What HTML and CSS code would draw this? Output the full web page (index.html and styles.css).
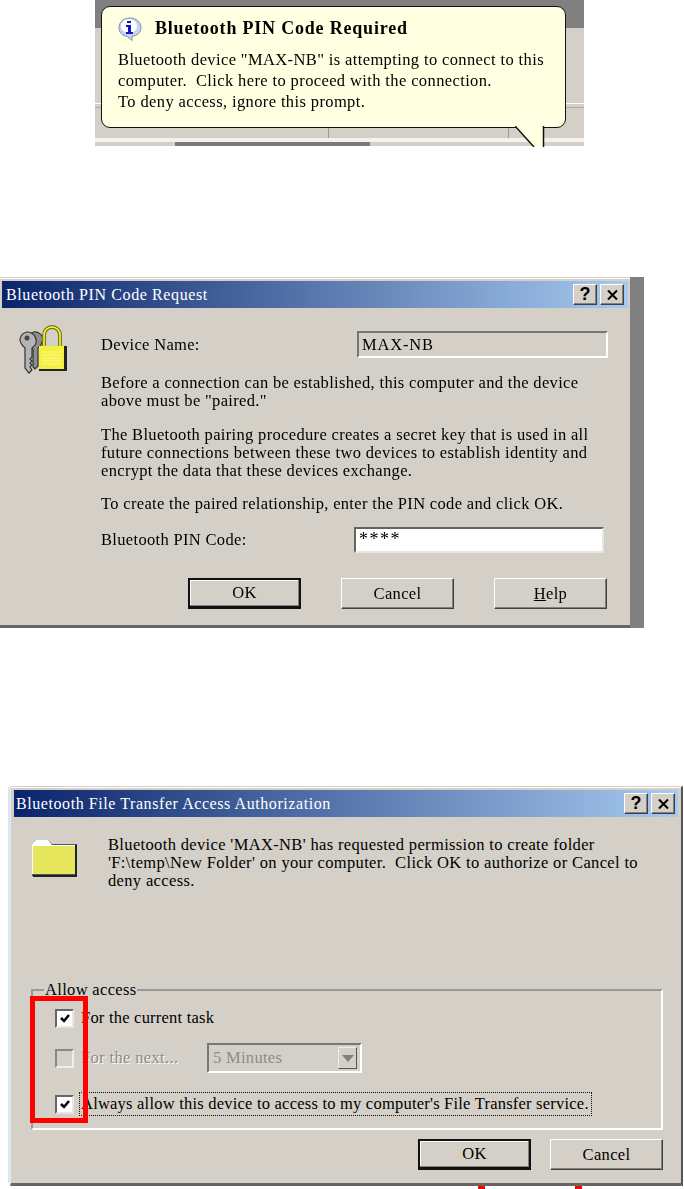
FILE: index.html
```html
<!DOCTYPE html>
<html lang="en">
<head>
<meta charset="utf-8">
<title>Bluetooth dialogs</title>
<link rel="stylesheet" href="styles.css">
</head>
<body>
<main class="page">
  <section class="tray">
    <div class="balloon">
      <div class="balloon-head">
        <svg class="info-icon" viewBox="0 0 24 24" width="24" height="24" aria-hidden="true">
          <path d="M12 1C5.500 1 1 5 1 10.500S5 19 9.500 19.600L14 23.500V19.500C19.500 18.500 23 15.500 23 10.500S18.500 1 12 1Z" fill="#c8d4ee" stroke="#7f8fa8"/>
          <ellipse cx="11" cy="9" rx="8" ry="7" fill="#fff"/>
          <path d="M9 6h4V4H9ZM8 8h5v7h2v2H8v-2h2v-5H8Z" fill="#1414c8"/>
        </svg>
        <strong class="balloon-title">Bluetooth PIN Code Required</strong>
      </div>
      <p class="balloon-text">Bluetooth device "MAX-NB" is attempting to connect to this<br>computer.&nbsp; Click here to proceed with the connection.<br>To deny access, ignore this prompt.</p>
    </div>
    <svg class="tail" viewBox="0 0 30 21" width="30" height="21" aria-hidden="true">
      <path d="M0 0 19 21H28.500V0Z" fill="#ffffe1"/>
      <path d="M0 0 19 21M28.500 21V0" fill="none" stroke="#111" stroke-width="1.500"/>
    </svg>
  </section>

  <section class="pin-wrap">
    <div class="dialog pin-dialog">
      <header class="titlebar">
        <span class="title-text">Bluetooth PIN Code Request</span>
        <div class="title-buttons">
          <span class="cap">?</span>
          <span class="cap"><svg viewBox="0 0 12 12" width="13" height="12" aria-hidden="true"><path d="M1.500 1.500 10.500 10.500M10.500 1.500 1.500 10.500" stroke="#000" stroke-width="2" fill="none"/></svg></span>
        </div>
      </header>
      <div class="pin-body">
        <svg class="lock-icon" viewBox="0 0 50 50" width="50" height="50" aria-hidden="true">
          <path d="M15 7a8 8 0 0 1 9 7l-2 6-3 3v18l-3 3-2-2v-17l-3-5a8 8 0 0 1 4-13Z" fill="#8e8e8e" stroke="#333" stroke-width="1.200"/>
          <path d="M8 7a9 9 0 0 0-7 7c0 5 3 7 5 9v20l4 5 3-3-2-3 2-2-2-2 2-2-2-2 2-2v-9c3-2 5-5 4-9a9 9 0 0 0-9-7Z" fill="#b4b4b4" stroke="#333" stroke-width="1.200"/>
          <circle cx="8" cy="13" r="2.500" fill="#444"/>
          <path d="M25 21V10a8 8 0 0 1 16 0v11" fill="none" stroke="#77771c" stroke-width="4"/>
          <path d="M25 21V10a8 8 0 0 1 16 0v11" fill="none" stroke="#ffff30" stroke-width="1.500"/>
          <rect x="20" y="21" width="28" height="25" fill="#222"/>
          <rect x="20" y="21" width="25" height="23" fill="#f4f040"/>
          <path d="M23 27h19M23 30h19M23 33h19M23 36h19M23 39h19" stroke="#fff890"/>
        </svg>
        <div class="pin-content">
          <div class="field-row device-row">
            <span>Device Name:</span>
            <span class="readonly-field">MAX-NB</span>
          </div>
          <p class="para para-first">Before a connection can be established, this computer and the device<br>above must be "paired."</p>
          <p class="para para-second">The Bluetooth pairing procedure creates a secret key that is used in all<br>future connections between these two devices to establish identity and<br>encrypt the data that these devices exchange.</p>
          <p class="para para-third">To create the paired relationship, enter the PIN code and click OK.</p>
          <div class="field-row code-row">
            <span>Bluetooth PIN Code:</span>
            <span class="text-field">****</span>
          </div>
          <div class="actions pin-actions">
            <span class="btn btn-default">OK</span>
            <span class="btn">Cancel</span>
            <span class="btn"><u>H</u>elp</span>
          </div>
        </div>
      </div>
    </div>
    <div class="shadow-strip"></div>
  </section>

  <section class="dialog auth-dialog">
    <header class="titlebar auth-titlebar">
      <span class="title-text auth-title">Bluetooth File Transfer Access Authorization</span>
      <div class="title-buttons">
        <span class="cap">?</span>
        <span class="cap"><svg viewBox="0 0 12 12" width="13" height="12" aria-hidden="true"><path d="M1.500 1.500 10.500 10.500M10.500 1.500 1.500 10.500" stroke="#000" stroke-width="2" fill="none"/></svg></span>
      </div>
    </header>
    <div class="auth-top">
      <svg class="folder-icon" viewBox="0 0 48 38" width="48" height="38" aria-hidden="true">
        <path d="M1 5 5 1H17L21 5H46V37H1Z" fill="#555"/>
        <path d="M1 5 5 1H17L21 6H44V35H1Z" fill="#fff"/>
        <path d="M2 7H44V35H2Z" fill="#e6e65c"/>
        <path d="M45 6V37H2" fill="none" stroke="#222" stroke-width="2"/>
      </svg>
      <p class="para auth-text">Bluetooth device 'MAX-NB' has requested permission to create folder<br>'F:\temp\New Folder' on your computer.&nbsp; Click OK to authorize or Cancel to<br>deny access.</p>
    </div>
    <fieldset class="group">
      <legend class="group-label">Allow access</legend>
      <div class="check-row row-one">
        <span class="checkbox"><svg viewBox="0 0 12 12" width="12" height="12" aria-hidden="true"><path d="M2 6 5 9 10 3" fill="none" stroke="#000" stroke-width="2.500"/></svg></span>
        <span class="check-label">For the current task</span>
      </div>
      <div class="check-row row-two">
        <span class="checkbox checkbox-off"></span>
        <span class="check-label label-off">For the next...</span>
        <span class="combo"><span class="combo-value">5 Minutes</span><span class="combo-arrow"></span></span>
      </div>
      <div class="check-row row-three">
        <span class="checkbox"><svg viewBox="0 0 12 12" width="12" height="12" aria-hidden="true"><path d="M2 6 5 9 10 3" fill="none" stroke="#000" stroke-width="2.500"/></svg></span>
        <span class="check-label label-focus">Always allow this device to access to my computer's File Transfer service.</span>
      </div>
      <div class="highlight"></div>
    </fieldset>
    <div class="actions auth-actions">
      <span class="btn btn-default">OK</span>
      <span class="btn">Cancel</span>
    </div>
  </section>
  <div class="marks"><span></span><span></span></div>
</main>
</body>
</html>
```
FILE: styles.css
```css
* { box-sizing: border-box; }
html, body { margin: 0; background: #fff; }
body { width: 684px; height: 1189px; overflow: hidden; }
.page {
  width: 684px;
  height: 1189px;
  font-family: "Liberation Serif", serif;
  font-size: 16.500px;
  letter-spacing: 0.33px;
  color: #000;
  filter: blur(0.4px);
}

/* balloon */
.tray {
  position: relative;
  width: 489px;
  height: 146px;
  margin-left: 95px;
  background:
    linear-gradient(#808080, #808080) 0 0 / 100% 28px no-repeat,
    linear-gradient(#aaa, #aaa) 0 107px / 100% 1px no-repeat,
    linear-gradient(#fff, #fff) 0 103px / 100% 1px no-repeat,
    linear-gradient(#999, #999) 233px 127px / 1px 11px no-repeat,
    linear-gradient(#999, #999) 413px 127px / 1px 11px no-repeat,
    linear-gradient(#f4f2ee, #f4f2ee) 0 138px / 100% 4px no-repeat,
    linear-gradient(#7a7a7a, #7a7a7a) 80px 142px / 195px 4px no-repeat,
    #d4d0c8;
}
.balloon {
  position: absolute;
  left: 6px;
  top: 6px;
  width: 465px;
  height: 122px;
  padding: 8px 16px;
  background: #ffffe1;
  border: 1.500px solid #111;
  border-radius: 9px;
}
.balloon-head { display: flex; align-items: center; gap: 13px; height: 27px; }
.info-icon { flex: none; }
.balloon-title { font-size: 18px; letter-spacing: 0.8px; white-space: nowrap; }
.balloon-text { margin: 7px 0 0; line-height: 21px; letter-spacing: 0.38px; white-space: nowrap; }
.tail { position: absolute; left: 420px; top: 126px; }

/* dialogs */
.dialog {
  background: #d4d0c8;
  border-top: 1px solid #d4d0c8;
  box-shadow: inset 0 1px 0 #fff;
}
.pin-wrap { display: flex; width: 644px; height: 351px; margin-top: 131px; }
.pin-dialog {
  width: 630px;
  padding: 3px 2px 0;
  border-bottom: 3px solid #666;
}
.shadow-strip { width: 14px; background: #808080; }
.titlebar {
  display: flex;
  align-items: center;
  justify-content: space-between;
  height: 27px;
  padding: 0 4px 0 4px;
  background: linear-gradient(90deg, #0a246a, #a6caf0);
}
.auth-titlebar { padding: 0 3px 0 2px; }
.title-text { color: #fff; font-size: 16px; letter-spacing: 0.6px; white-space: nowrap; }
.auth-title { letter-spacing: 0.57px; }
.title-buttons { display: flex; gap: 3px; }
.cap {
  display: flex;
  align-items: center;
  justify-content: center;
  width: 24px;
  height: 21px;
  background: #d4d0c8;
  border: 1px solid;
  border-color: #fff #404040 #404040 #fff;
  box-shadow: inset -1px -1px 0 #808080;
  color: #000;
  font-family: "Liberation Sans", sans-serif;
  font-weight: 700;
  font-size: 18px;
  letter-spacing: 0;
}
.pin-body { display: flex; }
.lock-icon { flex: none; margin: 17px 0 0 17px; }
.pin-content { margin-left: 32px; width: 507px; }
.field-row { display: flex; align-items: center; justify-content: space-between; }
.device-row { height: 27px; margin-top: 23px; }
.readonly-field {
  display: flex;
  align-items: center;
  width: 251px;
  height: 27px;
  padding-left: 3px;
  border: 2px solid;
  border-color: #77756f #fff #fff #77756f;
  letter-spacing: 0.8px;
}
.text-field {
  display: flex;
  align-items: flex-start;
  width: 250px;
  height: 26px;
  padding-left: 3px;
  background: #fff;
  border: 2px solid;
  border-color: #66645f #e8e6e0 #e8e6e0 #66645f;
  font-size: 18px;
  letter-spacing: 1.500px;
}
.para { margin: 0; line-height: 18px; white-space: nowrap; }
.para-first { margin-top: 16px; }
.para-second { margin-top: 16px; }
.para-third { margin-top: 15px; }
.code-row { height: 26px; margin-top: 14px; padding-right: 4px; }
.actions { display: flex; }
.pin-actions { gap: 40px; margin: 25px 0 0 87px; }
.btn {
  display: flex;
  align-items: center;
  justify-content: center;
  width: 113px;
  height: 31px;
  border: 1px solid;
  border-color: #fff #404040 #404040 #fff;
  box-shadow: inset -1px -1px 0 #808080;
  background: #d4d0c8;
}
.btn-default {
  border: 2px solid #111;
  border-bottom-width: 3px;
  box-shadow: inset -1px -1px 0 #808080, inset 1px 1px 0 #fff;
}

/* auth */
.auth-dialog {
  position: relative;
  width: 673px;
  height: 400px;
  margin: 158px 0 0 10px;
  padding: 3px 3px 0 3px;
  border-left: 1px solid #e8e8e8;
  border-right: 2px solid #555;
  border-bottom: 3px solid #666;
}
.auth-dialog::before {
  content: "";
  position: absolute;
  left: -3px;
  top: 0;
  bottom: 0;
  width: 2px;
  background: #dbe6f4;
}
.auth-top { display: flex; height: 166px; }
.folder-icon { flex: none; margin: 22px 0 0 17px; }
.auth-text { margin: 19px 0 0 29px; letter-spacing: 0.35px; }
.group {
  position: relative;
  width: 632px;
  height: 147px;
  margin: 0 0 0 17px;
  padding: 0 0 0 22px;
  border: 2px solid;
  border-color: #999 #fff #fff #999;
  min-width: 0;
}
.group-label { margin-left: -11px; padding: 0 1px; line-height: 14px; }
.check-row { display: flex; align-items: center; }
.row-one { height: 20px; margin-top: 11px; }
.row-two { height: 30px; margin-top: 15px; }
.row-three { height: 22px; margin-top: 20px; }
.checkbox {
  flex: none;
  display: flex;
  align-items: center;
  justify-content: center;
  width: 19px;
  height: 19px;
  background: #fff;
  border: 2px solid;
  border-color: #666 #e8e6e0 #e8e6e0 #666;
}
.checkbox-off { background: #d4d0c8; border-color: #888 #f0eee8 #f0eee8 #888; }
.check-label { margin-left: 7px; white-space: nowrap; letter-spacing: 0.22px; }
.label-off { width: 126px; color: #8e8c86; text-shadow: 1px 1px 0 #fff; letter-spacing: 0.35px; }
.label-focus { margin-left: 6px; padding: 1px 2px 1px 1px; outline: 1px dotted #111; }
.combo {
  display: flex;
  align-items: center;
  justify-content: space-between;
  width: 155px;
  height: 30px;
  padding: 0 3px 0 4px;
  border: 2px solid;
  border-color: #777 #fff #fff #777;
  color: #8e8c86;
  letter-spacing: 0.3px;
}
.combo-arrow {
  position: relative;
  width: 19px;
  height: 22px;
  border: 1px solid;
  border-color: #eee #555 #555 #eee;
}
.combo-arrow::after {
  content: "";
  position: absolute;
  left: 3px;
  top: 7px;
  border: 6px solid transparent;
  border-top: 7px solid #808080;
  border-bottom: 0;
}
.highlight {
  position: absolute;
  left: -3px;
  top: -1px;
  width: 58px;
  height: 127px;
  border: 5px solid #f00;
}
.auth-actions { gap: 19px; margin: 9px 0 0 404px; }

.marks { display: flex; gap: 90px; margin-left: 478px; }
.marks span { width: 7px; height: 3px; background: #f00; }
```
